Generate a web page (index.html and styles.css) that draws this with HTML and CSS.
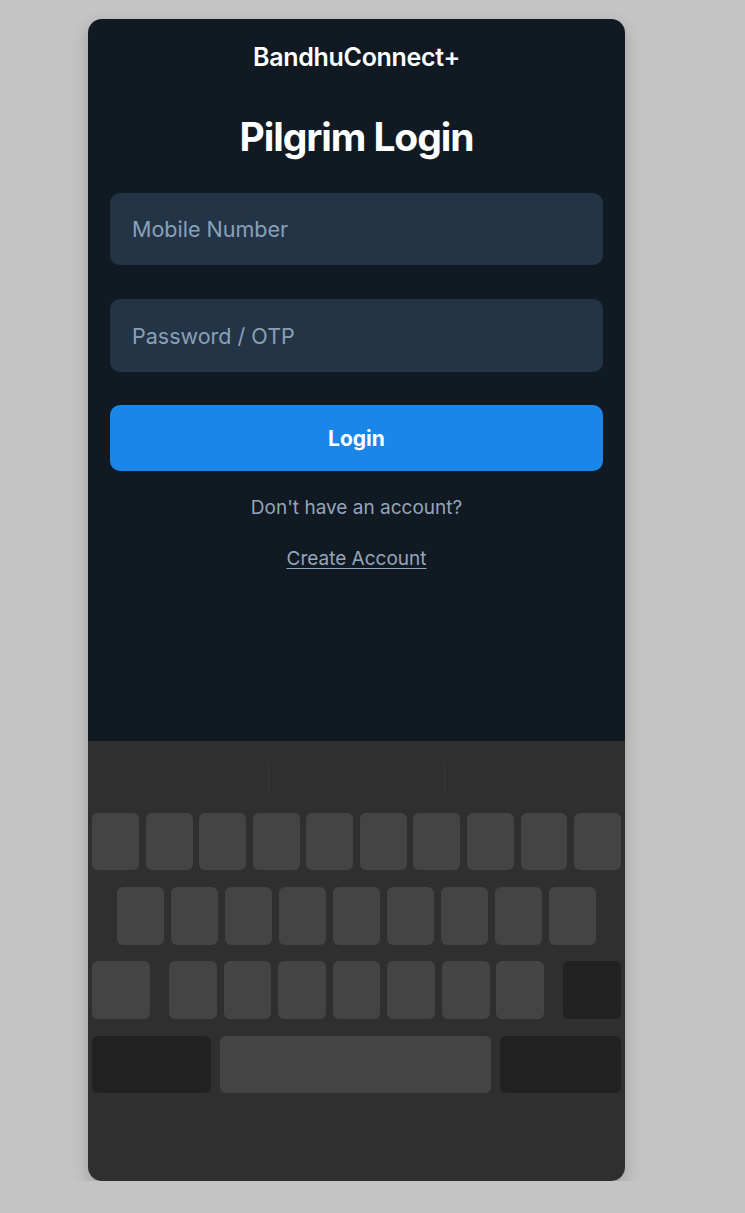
FILE: index.html
```html
<!DOCTYPE html>
<html lang="en">
<head>
<meta charset="utf-8">
<title>BandhuConnect+ – Pilgrim Login</title>
<link rel="stylesheet" href="styles.css">
</head>
<body>
<div class="phone">
  <main class="screen">
    <div class="brand">BandhuConnect+</div>
    <h1 class="title">Pilgrim Login</h1>
    <input class="field" type="tel" placeholder="Mobile Number">
    <input class="field field-pass" type="password" placeholder="Password / OTP">
    <button class="login-btn" type="button">Login</button>
    <p class="hint">Don't have an account?</p>
    <a class="create" href="#">Create Account</a>
  </main>
  <div class="keyboard">
    <div class="suggest">
      <span class="sug-cell"></span>
      <span class="sug-div"></span>
      <span class="sug-cell"></span>
      <span class="sug-div"></span>
      <span class="sug-cell"></span>
    </div>
    <div class="kb-row row1">
      <span class="key"></span><span class="key"></span><span class="key"></span><span class="key"></span><span class="key"></span>
      <span class="key"></span><span class="key"></span><span class="key"></span><span class="key"></span><span class="key"></span>
    </div>
    <div class="kb-row row2">
      <span class="key"></span><span class="key"></span><span class="key"></span><span class="key"></span><span class="key"></span>
      <span class="key"></span><span class="key"></span><span class="key"></span><span class="key"></span>
    </div>
    <div class="kb-row row3">
      <span class="key key-side"></span>
      <div class="letters">
        <span class="key"></span><span class="key"></span><span class="key"></span><span class="key"></span>
        <span class="key"></span><span class="key"></span><span class="key"></span>
      </div>
      <span class="key key-side key-dark"></span>
    </div>
    <div class="kb-row row4">
      <span class="key key-dark key-left"></span>
      <span class="key key-space"></span>
      <span class="key key-dark key-right"></span>
    </div>
  </div>
</div>
</body>
</html>
```

FILE: styles.css
```css
* { box-sizing: border-box; }

body {
  margin: 0;
  background: #c4c4c4;
  padding: 19px 0 0 88px;
  font-family: Inter, "Noto Sans", sans-serif;
}

.phone {
  width: 537px;
  height: 1162px;
  border-radius: 14px;
  overflow: hidden;
  display: flex;
  flex-direction: column;
  box-shadow: 0 6px 16px rgba(0, 0, 0, 0.2);
}

.screen {
  height: 722px;
  background: #111922;
  padding: 0 22px;
  display: flex;
  flex-direction: column;
  align-items: center;
}

.brand {
  margin-top: 23px;
  font-size: 25px;
  line-height: 30px;
  font-weight: 600;
  color: #ffffff;
  letter-spacing: -0.3px;
}

.title {
  margin: 41px 0 0;
  font-size: 39px;
  line-height: 48px;
  font-weight: 700;
  color: #ffffff;
  letter-spacing: -1.1px;
}

.field {
  display: block;
  width: 100%;
  height: 72px;
  margin-top: 32px;
  border: 0;
  border-radius: 10px;
  background: #243447;
  padding: 0 22px;
  font-family: inherit;
  font-size: 21.5px;
  color: #ffffff;
  outline: none;
}

.field::placeholder { color: #8aa0b7; }

.field-pass {
  height: 73px;
  margin-top: 34px;
}

.login-btn {
  display: block;
  width: 100%;
  height: 66px;
  margin-top: 33px;
  border: 0;
  border-radius: 10px;
  background: #1a86e8;
  color: #ffffff;
  font-family: inherit;
  font-size: 21px;
  font-weight: 700;
}

.hint {
  margin: 25px 0 0;
  font-size: 19px;
  line-height: 24px;
  color: #94a6ba;
}

.create {
  margin-top: 27px;
  font-size: 19px;
  line-height: 24px;
  color: #94a6ba;
  text-decoration: underline;
  text-underline-offset: 3px;
}

.keyboard {
  flex: 1;
  background: #2f2f2f;
  padding: 0 4px;
  display: flex;
  flex-direction: column;
  gap: 16.8px;
}

.suggest {
  height: 55px;
  display: flex;
  align-items: center;
}

.sug-cell { flex: 1; }

.sug-div {
  width: 1px;
  height: 34px;
  margin-top: 18px;
  background: #383838;
}

.kb-row {
  display: flex;
  height: 57.5px;
}

.key {
  flex: 1;
  height: 100%;
  border-radius: 6px;
  background: #444444;
}

.row1 { gap: 6.6px; }

.row2 {
  gap: 7px;
  padding: 0 25px;
}

.row3 { gap: 19px; }

.row3 .key-side { flex: 0 0 58px; }

.letters {
  flex: 1;
  display: flex;
  gap: 6.6px;
}

.key-dark { background: #212121; }

.row4 { gap: 9px; }

.key-left { flex: 0 0 119px; }
.key-right { flex: 0 0 121px; }
.key-space { flex: 1; }
```
